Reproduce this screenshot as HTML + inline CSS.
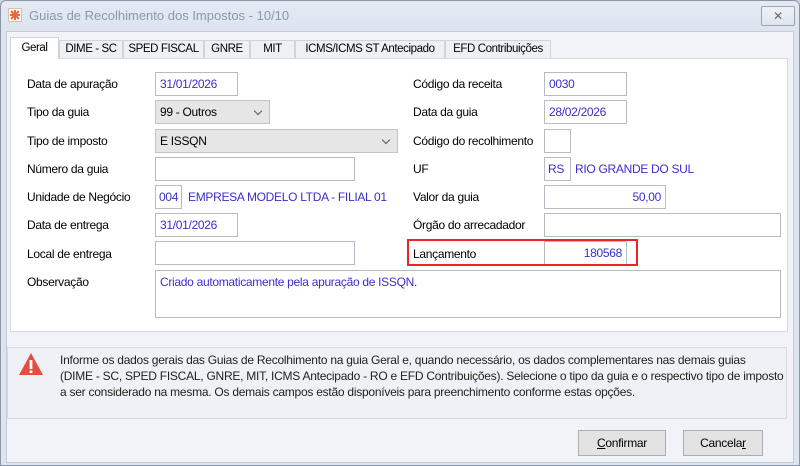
<!DOCTYPE html>
<html><head><meta charset="utf-8"><style>
*{box-sizing:border-box;margin:0;padding:0}
body{width:800px;height:466px;overflow:hidden;background:#cfd6df;font-family:"Liberation Sans",sans-serif;font-size:12px;letter-spacing:-0.3px;color:#000;position:relative}
.win{position:absolute;left:0;top:0;width:800px;height:466px;border:1px solid #8a96a6;border-radius:6px 6px 0 0;background:linear-gradient(#e3eaf3,#dbe4ef 30px,#dbe4ef);}
.body{position:absolute;left:5px;top:30px;width:788px;height:432px;background:#f1f3f8;border:1px solid #c5ccd6}
.title{position:absolute;left:28px;top:7px;font-size:13px;color:#8e98a4;letter-spacing:0}
.ico{position:absolute;left:7px;top:7px;width:14px;height:14px;background:#fff;border:1px solid #e9b9a0}
.close{position:absolute;left:760px;top:5px;width:34px;height:20px;border:1px solid #9aa5b2;border-radius:2px;background:linear-gradient(#eef2f7,#dde4ec);color:#666;font-size:12px;text-align:center;line-height:18px}
.tab{position:absolute;top:40px;height:18px;border:1px solid #d0d4da;border-bottom:none;background:#eef0f3;text-align:center;line-height:16px;font-size:11.5px;letter-spacing:-0.4px}
.tab.a{top:37px;height:22px;background:#fff;z-index:2;line-height:20px}
.panel{position:absolute;left:10px;top:58px;width:778px;height:274px;background:#fff;border:1px solid #d6dbe2}
.l{position:absolute;line-height:14px}
.i{position:absolute;height:24px;border:1px solid #b8bcc2;background:#fff;color:#3a2fc9;padding:0 4px;line-height:22px}
.s{background:#e6e6e6;border-color:#c4c4c4;color:#000}
.s:after{content:"";position:absolute;right:8px;top:7px;width:5px;height:5px;border-right:1px solid #555;border-bottom:1px solid #555;transform:rotate(45deg)}
.r{text-align:right}
.t{position:absolute;color:#3a2fc9;line-height:14px}
.info{position:absolute;left:7px;top:347px;width:780px;height:72px;border:1px solid #d6dae1;background:#eff1f6}
.btn{position:absolute;top:430px;height:26px;border:1px solid #adadad;background:#e3e3e3;text-align:center;line-height:24px}
</style></head><body>
<div class="win">
<div class="ico"><svg width="12" height="12" viewBox="0 0 12 12"><path d="M2 2l8 8M10 2l-8 8M6 1v10M1 6h10" stroke="#e8693a" stroke-width="2"/></svg></div>
<div class="title">Guias de Recolhimento dos Impostos - 10/10</div>
<div class="close">✕</div>
<div class="body"></div>
</div>
<div class="tab a" style="left:10px;width:49px">Geral</div>
<div class="tab" style="left:59px;width:64px">DIME - SC</div>
<div class="tab" style="left:123px;width:81px">SPED FISCAL</div>
<div class="tab" style="left:204px;width:46px">GNRE</div>
<div class="tab" style="left:250px;width:45px">MIT</div>
<div class="tab" style="left:295px;width:150px">ICMS/ICMS ST Antecipado</div>
<div class="tab" style="left:445px;width:106px">EFD Contribuições</div>
<div class="panel"></div>

<div class="l" style="left:27px;top:77px">Data de apuração</div>
<div class="i" style="left:155px;top:72px;width:83px">31/01/2026</div>
<div class="l" style="left:27px;top:105px">Tipo da guia</div>
<div class="i s" style="left:155px;top:100px;width:115px">99 - Outros</div>
<div class="l" style="left:27px;top:134px">Tipo de imposto</div>
<div class="i s" style="left:155px;top:129px;width:243px">E ISSQN</div>
<div class="l" style="left:27px;top:162px">Número da guia</div>
<div class="i" style="left:155px;top:157px;width:200px"></div>
<div class="l" style="left:27px;top:190px">Unidade de Negócio</div>
<div class="i" style="left:155px;top:185px;width:27px;padding:0 3px">004</div>
<div class="t" style="left:188px;top:190px">EMPRESA MODELO LTDA - FILIAL 01</div>
<div class="l" style="left:27px;top:218px">Data de entrega</div>
<div class="i" style="left:155px;top:213px;width:83px">31/01/2026</div>
<div class="l" style="left:27px;top:247px">Local de entrega</div>
<div class="i" style="left:155px;top:241px;width:200px"></div>
<div class="l" style="left:27px;top:275px">Observação</div>
<div class="i" style="left:155px;top:270px;width:626px;height:48px;line-height:14px;padding-top:4px">Criado automaticamente pela apuração de ISSQN.</div>

<div class="l" style="left:413px;top:77px">Código da receita</div>
<div class="i" style="left:544px;top:72px;width:83px">0030</div>
<div class="l" style="left:413px;top:105px">Data da guia</div>
<div class="i" style="left:544px;top:100px;width:83px">28/02/2026</div>
<div class="l" style="left:413px;top:134px">Código do recolhimento</div>
<div class="i" style="left:544px;top:129px;width:27px"></div>
<div class="l" style="left:413px;top:162px">UF</div>
<div class="i" style="left:544px;top:157px;width:27px;padding:0 3px">RS</div>
<div class="t" style="left:575px;top:162px">RIO GRANDE DO SUL</div>
<div class="l" style="left:413px;top:190px">Valor da guia</div>
<div class="i r" style="left:544px;top:185px;width:122px">50,00</div>
<div class="l" style="left:413px;top:218px">Órgão do arrecadador</div>
<div class="i" style="left:544px;top:213px;width:237px"></div>
<div class="l" style="left:413px;top:247px">Lançamento</div>
<div class="i r" style="left:544px;top:241px;width:83px">180568</div>
<div style="position:absolute;left:407px;top:239px;width:231px;height:27px;border:2px solid #e8262a"></div>

<div class="info"></div>
<svg style="position:absolute;left:18px;top:352px" width="26" height="24" viewBox="0 0 26 24"><path d="M13 1L25 23H1Z" fill="#e84c3d"/><rect x="11.6" y="8" width="2.8" height="9" fill="#fff"/><rect x="11.6" y="18.5" width="2.8" height="2.6" fill="#fff"/></svg>
<div style="position:absolute;left:60px;top:352px;white-space:nowrap;font-size:12px;letter-spacing:-0.25px;line-height:16px;color:#222">Informe os dados gerais das Guias de Recolhimento na guia Geral e, quando necessário, os dados complementares nas demais guias<br>(DIME - SC, SPED FISCAL, GNRE, MIT, ICMS Antecipado - RO e EFD Contribuições). Selecione o tipo da guia e o respectivo tipo de imposto<br>a ser considerado na mesma. Os demais campos estão disponíveis para preenchimento conforme estas opções.</div>
<div class="btn" style="left:578px;width:88px"><u>C</u>onfirmar</div>
<div class="btn" style="left:683px;width:80px">Cancela<u>r</u></div>
</body></html>
